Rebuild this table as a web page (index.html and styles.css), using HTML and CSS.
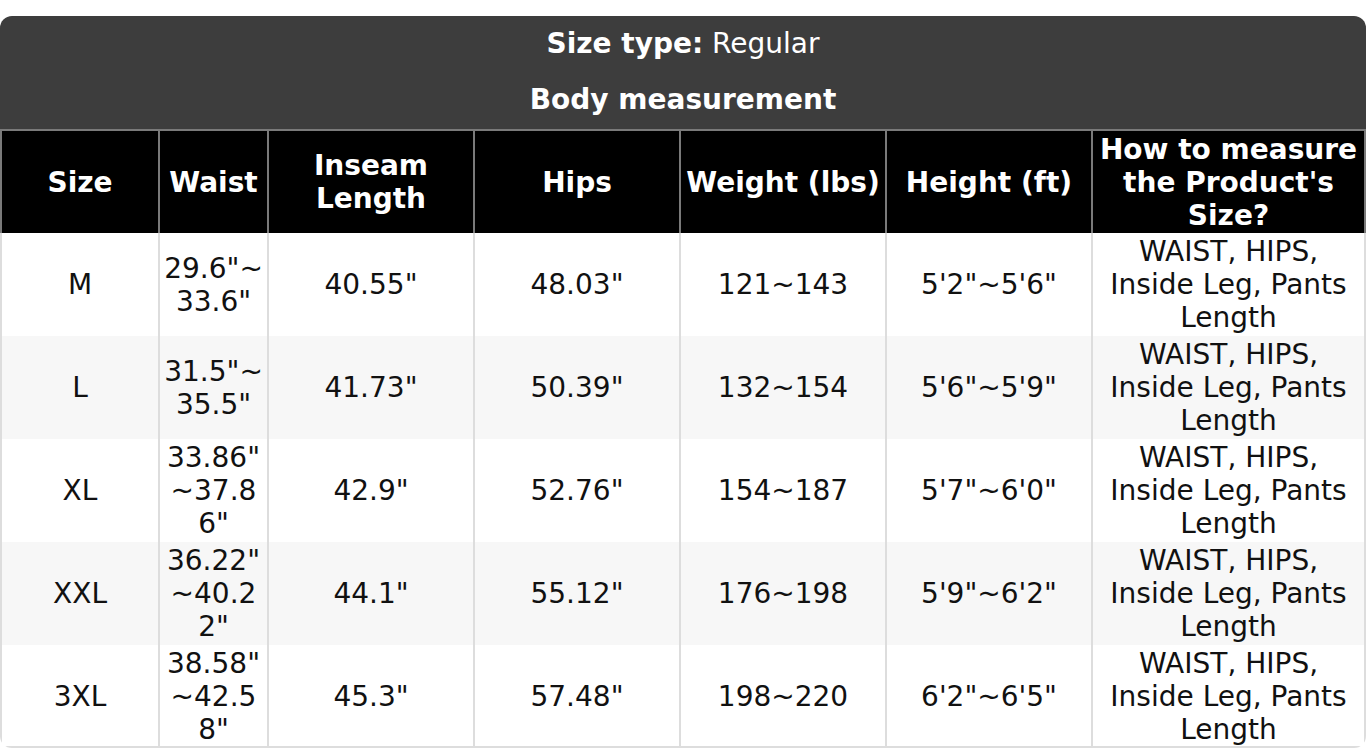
FILE: index.html
```html
<!DOCTYPE html>
<html lang="en">
<head>
<meta charset="utf-8">
<title>Size chart</title>
<link rel="stylesheet" href="styles.css">
</head>
<body>
<div class="card">
  <div class="title">
    <div class="title-line"><b>Size type:</b> Regular</div>
    <div class="title-line"><b>Body measurement</b></div>
  </div>
  <div class="grid">
    <div class="th first">Size</div>
    <div class="th">Waist</div>
    <div class="th">Inseam Length</div>
    <div class="th">Hips</div>
    <div class="th">Weight (lbs)</div>
    <div class="th">Height (ft)</div>
    <div class="th">How to measure the Product's Size?</div>

    <div class="td first">M</div>
    <div class="td waist">29.6"~33.6"</div>
    <div class="td">40.55"</div>
    <div class="td">48.03"</div>
    <div class="td">121~143</div>
    <div class="td">5'2"~5'6"</div>
    <div class="td">WAIST, HIPS, Inside Leg, Pants Length</div>

    <div class="td first alt">L</div>
    <div class="td waist alt">31.5"~35.5"</div>
    <div class="td alt">41.73"</div>
    <div class="td alt">50.39"</div>
    <div class="td alt">132~154</div>
    <div class="td alt">5'6"~5'9"</div>
    <div class="td alt">WAIST, HIPS, Inside Leg, Pants Length</div>

    <div class="td first">XL</div>
    <div class="td waist">33.86"~37.86"</div>
    <div class="td">42.9"</div>
    <div class="td">52.76"</div>
    <div class="td">154~187</div>
    <div class="td">5'7"~6'0"</div>
    <div class="td">WAIST, HIPS, Inside Leg, Pants Length</div>

    <div class="td first alt">XXL</div>
    <div class="td waist alt">36.22"~40.22"</div>
    <div class="td alt">44.1"</div>
    <div class="td alt">55.12"</div>
    <div class="td alt">176~198</div>
    <div class="td alt">5'9"~6'2"</div>
    <div class="td alt">WAIST, HIPS, Inside Leg, Pants Length</div>

    <div class="td first last">3XL</div>
    <div class="td waist last">38.58"~42.58"</div>
    <div class="td last">45.3"</div>
    <div class="td last">57.48"</div>
    <div class="td last">198~220</div>
    <div class="td last">6'2"~6'5"</div>
    <div class="td last">WAIST, HIPS, Inside Leg, Pants Length</div>
  </div>
</div>
</body>
</html>
```

FILE: styles.css
```css
html, body {
  margin: 0;
  padding: 0;
  background: #ffffff;
}

body {
  padding-top: 16px;
  font-family: "DejaVu Sans", "Liberation Sans", sans-serif;
  font-size: 28px;
  color: #111111;
}

.card {
  border-radius: 12px;
  overflow: hidden;
  background: #ffffff;
}

.title {
  background: #3d3d3d;
  color: #ffffff;
  text-align: center;
}

.title-line {
  padding: 10.5px 0 13px;
  line-height: 33px;
}

.title-line b {
  font-weight: bold;
}

.grid {
  display: grid;
  grid-template-columns: 160px 109px 206px 206px 206px 206px 1fr;
}

.th,
.td {
  box-sizing: border-box;
  display: flex;
  align-items: center;
  justify-content: center;
  text-align: center;
  line-height: 33px;
  padding: 2px 3px;
  min-width: 0;
}

.th {
  background: #000000;
  color: #ffffff;
  font-weight: bold;
  border-top: 2px solid #7a7a7a;
  border-right: 2px solid #7a7a7a;
  padding-top: 1.5px;
  padding-bottom: 1.5px;
}

.th.first {
  border-left: 2px solid #7a7a7a;
}

.td {
  background: #ffffff;
  border-right: 2px solid #dddddd;
}

.td.first {
  border-left: 2px solid #dddddd;
}

.td.alt {
  background: #f7f7f7;
}

.td.last {
  border-bottom: 2px solid #dddddd;
  padding-bottom: 0;
}

.waist {
  overflow-wrap: anywhere;
}
```
